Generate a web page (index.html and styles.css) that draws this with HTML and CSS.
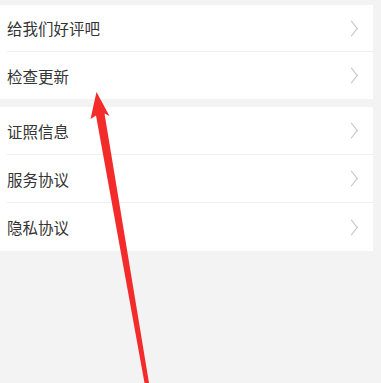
FILE: index.html
```html
<!DOCTYPE html>
<html>
    <head>
        <meta charset="UTF-8">
        <title>设置</title>
        <link rel="stylesheet" href="styles.css">
    </head>
    <body>
        <div class="page">
            <ul class="group">
                <li class="item"><span class="label">给我们好评吧</span><i class="arrow"></i></li>
                <li class="item"><span class="label">检查更新</span><i class="arrow"></i></li>
            </ul>
            <ul class="group">
                <li class="item"><span class="label">证照信息</span><i class="arrow"></i></li>
                <li class="item"><span class="label">服务协议</span><i class="arrow"></i></li>
                <li class="item"><span class="label">隐私协议</span><i class="arrow"></i></li>
            </ul>
        </div>
        <svg class="mark" width="381" height="383" viewBox="0 0 381 383">
            <polygon fill="#f42b2b" points="96.5,92 109.5,116 104.5,113.5 149,383 144.5,383 96,115.5 90.5,119"/>
        </svg>
    </body>
</html>
```

FILE: styles.css
```css
*{
    padding:0;
    margin:0;
}
ul,li{
    list-style:none;
}
html,body{
    height:100%;
}
body{
    background:#f3f3f3;
    font-family:"Noto Sans CJK SC",sans-serif;
    color:#333;
    overflow:hidden;
}
.page{
    padding-top:5px;
    margin-right:8px;
}
.group{
    background:#fff;
    padding-left:7px;
    margin-bottom:8px;
}
.item{
    display:flex;
    align-items:center;
    justify-content:space-between;
    height:47px;
    padding-right:17px;
    border-bottom:1px solid #efefef;
    box-sizing:border-box;
}
.item:last-child{
    border-bottom:none;
    height:47px;
}
.group:last-child .item{
    height:48px;
}
.label{
    font-size:15.5px;
    line-height:20px;
}
.arrow{
    display:block;
    width:8px;
    height:8px;
    border-top:1px solid #c9c9c9;
    border-right:1px solid #c9c9c9;
    transform:scaleY(1.3) rotate(45deg);
}
.mark{
    position:absolute;
    left:0;
    top:0;
}
```
